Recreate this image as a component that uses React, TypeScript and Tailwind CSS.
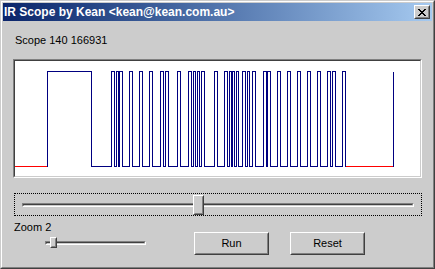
import React from "react";

// pulse train, absolute pixel columns [rise, fall]
const pulses: [ number, number ][] = [
  [ 47, 91 ],
  [ 111, 114 ], [ 116, 118 ], [ 119, 122 ],
  [ 129, 132 ], [ 139, 142 ], [ 149, 152 ],
  [ 160, 163 ], [ 165, 168 ], [ 177, 180 ],
  [ 188, 191 ], [ 193, 195 ], [ 197, 199 ], [ 201, 204 ],
  [ 214, 217 ], [ 224, 227 ],
  [ 229, 231 ], [ 232, 234 ], [ 236, 238 ],
  [ 242, 245 ], [ 247, 249 ], [ 252, 255 ],
  [ 263, 266 ], [ 267, 270 ],
  [ 277, 280 ], [ 287, 290 ], [ 297, 300 ], [ 307, 310 ], [ 317, 320 ],
  [ 327, 330 ], [ 332, 335 ], [ 342, 345 ]
];

const LEFT = 15;
const TOP = 10.5;
const LOW = 105.5;

const px = ( x: number ) => x - LEFT + 0.5;

function buildPath() {

  let d = `M ${px( pulses[ 0 ][ 0 ] )} ${LOW}`;

  pulses.forEach( ( [ rise, fall ] ) => {

    d += ` H ${px( rise )} V ${TOP} H ${px( fall )} V ${LOW}`;

  } );

  return d;

}

function Raised( { className = '', children }: { className?: string, children?: React.ReactNode } ) {

  return (

    <div className={`border border-t-white border-l-white border-b-[#404040] border-r-[#404040] bg-[#cccccc] ${className}`}>

      <div className="w-full h-full border border-t-[#cccccc] border-l-[#cccccc] border-b-[#808080] border-r-[#808080] flex items-center justify-center">

        { children }

      </div>

    </div>

  )

}

function Track( { className = '' }: { className?: string } ) {

  return (

    <div className={`h-[4px] border border-t-[#808080] border-l-[#808080] border-b-white border-r-white ${className}`}>

      <div className="h-full border border-t-[#404040] border-l-[#404040] border-b-[#cccccc] border-r-[#cccccc]" />

    </div>

  )

}

export default function App() {

  const last = pulses[ pulses.length - 1 ][ 1 ];

  return (

    <div className="w-[435px] h-[269px] bg-[#cccccc] border border-t-[#cccccc] border-l-[#cccccc] border-b-[#404040] border-r-[#404040] font-['Liberation_Sans',Arial,sans-serif] text-black">

      <div className="h-full p-[1px] border border-t-white border-l-white border-b-[#808080] border-r-[#808080] flex flex-col">

        {/* Title bar */}
        <div className="h-[18px] flex items-center justify-between bg-linear-to-r from-[#0a246a] to-[#a6caf0]">

          <span className="pl-[1px] text-white font-bold text-[12px] leading-[18px]">IR Scope by Kean &lt;kean@kean.com.au&gt;</span>

          <Raised className="w-[16px] h-[14px] mr-[2px]">

            <svg width="8" height="7" viewBox="0 0 8 7" shapeRendering="crispEdges">
              <path d="M0 0h2v1H0zM1 1h2v1H1zM2 2h4v1H2zM3 3h2v1H3zM2 4h4v1H2zM1 5h2v1H1zM0 6h2v1H0zM6 0h2v1H6zM5 1h2v1H5zM5 5h2v1H5zM6 6h2v1H6z" fill="#000" />
            </svg>

          </Raised>

        </div>

        {/* Content */}
        <div className="flex-1 px-[10px] text-[11px] leading-[13px]">

          <div className="mt-[13px] pl-[2px]">Scope 140 166931</div>

          {/* Scope */}
          <div className="mt-[12px] h-[119px] border border-t-[#808080] border-l-[#808080] border-b-white border-r-white">

            <div className="h-full bg-white border border-t-[#404040] border-l-[#404040] border-b-[#cccccc] border-r-[#cccccc]">

              <svg width="405" height="115" className="block" shapeRendering="crispEdges">

                <path d={`M 0 ${LOW} H ${px( 47 )}`} stroke="#ff0000" fill="none" />

                <path d={`M ${px( last )} ${LOW} H ${px( 393 )}`} stroke="#ff0000" fill="none" />

                <path d={buildPath()} stroke="#000080" fill="none" />

                <path d={`M ${px( 393 )} ${LOW} V ${TOP}`} stroke="#000080" fill="none" />

              </svg>

            </div>

          </div>

          {/* Position slider */}
          <div className="relative mt-[15px] ml-[1px] h-[23px] border border-dotted border-black pt-[9px] px-[7px]">

            <Track />

            <Raised className="absolute left-[178px] top-[1px] w-[11px] h-[20px]" />

          </div>

          <div className="flex">

            {/* Zoom */}
            <div className="w-[180px] ml-[1px]">

              <div className="mt-[5px]">Zoom 2</div>

              <div className="relative mt-[3px] h-[11px] pt-[4px]">

                <Track className="ml-[31px] w-[101px]" />

                <Raised className="absolute left-[36px] top-0 w-[7px] h-[11px]" />

              </div>

            </div>

            <Raised className="mt-[16px] w-[75px] h-[23px]">Run</Raised>

            <Raised className="mt-[16px] ml-[21px] w-[75px] h-[23px]">Reset</Raised>

          </div>

        </div>

      </div>

    </div>

  )

}
